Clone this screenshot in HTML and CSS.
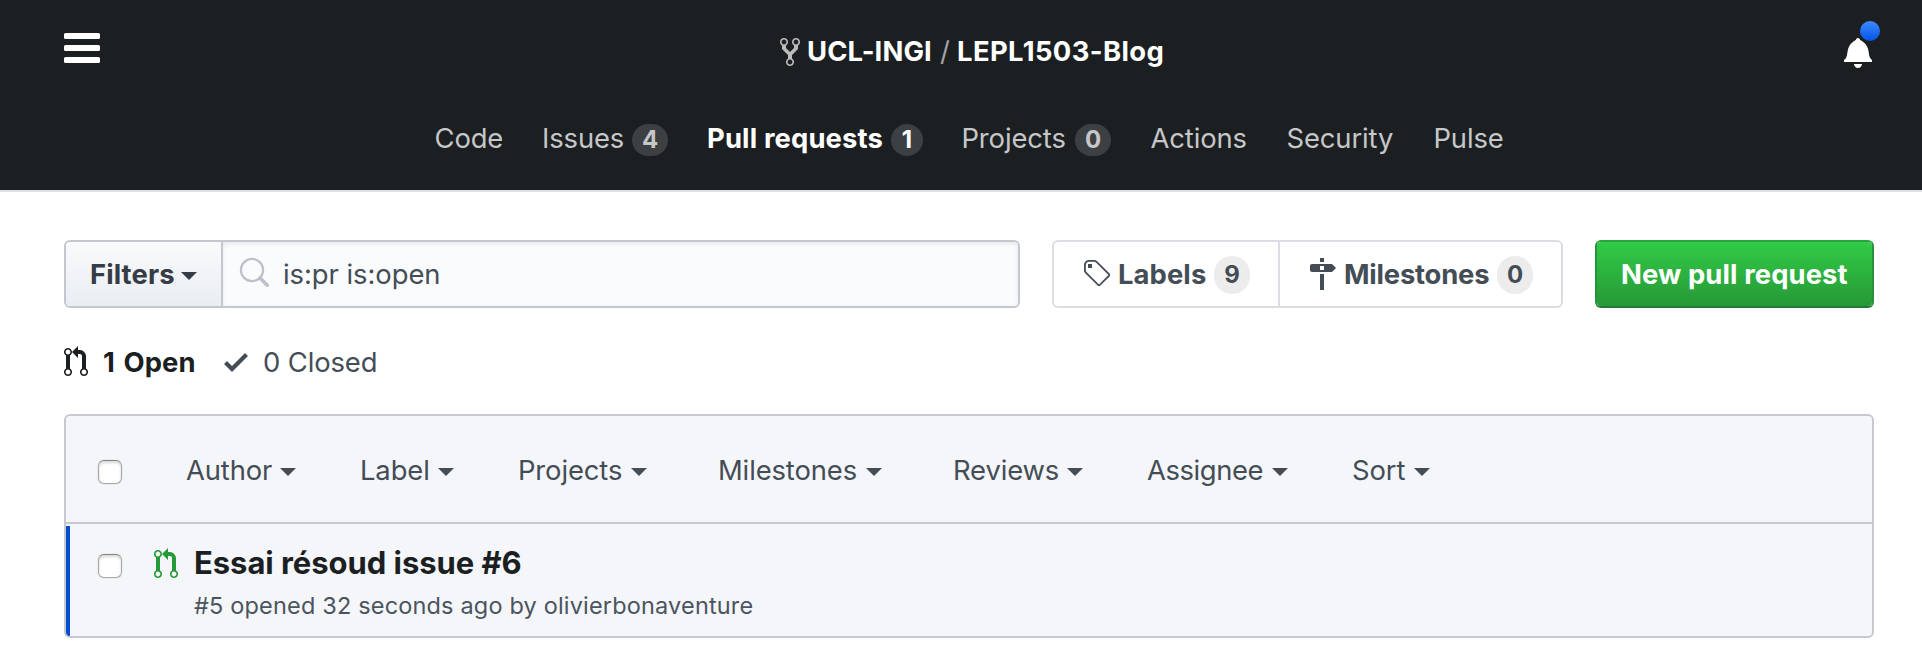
FILE: index.html
```html
<!DOCTYPE html>
<html lang="en">
<head>
<meta charset="utf-8">
<title>Pull requests · UCL-INGI/LEPL1503-Blog</title>
<link rel="stylesheet" href="styles.css">
</head>
<body>
<svg class="defs" aria-hidden="true">
  <symbol id="pr" viewBox="0 0 12 16"><path fill-rule="evenodd" d="M11 11.28V5c-.03-.78-.34-1.47-.94-2.06C9.46 2.35 8.78 2.03 8 2H7V0L4 3l3 3V4h1c.27.02.48.11.69.31.21.2.3.42.31.69v6.28A1.993 1.993 0 0 0 10 15a1.993 1.993 0 0 0 1-3.72zm-1 2.92c-.66 0-1.2-.55-1.2-1.2 0-.65.55-1.2 1.2-1.2.65 0 1.2.55 1.2 1.2 0 .65-.55 1.2-1.2 1.2zM4 3c0-1.11-.89-2-2-2a1.993 1.993 0 0 0-1 3.72v6.56A1.993 1.993 0 0 0 2 15a1.993 1.993 0 0 0 1-3.72V4.72c.59-.34 1-.98 1-1.72zm-.8 10c0 .66-.55 1.2-1.2 1.2-.65 0-1.2-.55-1.2-1.2 0-.65.55-1.2 1.2-1.2.65 0 1.2.55 1.2 1.2zM2 4.2C1.34 4.2.8 3.65.8 3c0-.65.55-1.2 1.2-1.2.65 0 1.2.55 1.2 1.2 0 .65-.55 1.2-1.2 1.2z"/></symbol>
</svg>
<header class="header">
  <div class="topbar">
    <button class="menu" aria-label="Menu"><i></i><i></i><i></i></button>
    <h1 class="repo">
      <svg class="fork" width="20" height="32" viewBox="0 0 10 16"><path fill-rule="evenodd" d="M8 1a1.993 1.993 0 0 0-1 3.72V6L5 8 3 6V4.72A1.993 1.993 0 0 0 2 1a1.993 1.993 0 0 0-1 3.72V6.5l3 3v1.78A1.993 1.993 0 0 0 5 15a1.993 1.993 0 0 0 1-3.72V9.5l3-3V4.72A1.993 1.993 0 0 0 8 1zM2 4.2C1.34 4.2.8 3.65.8 3c0-.65.55-1.2 1.2-1.2.65 0 1.2.55 1.2 1.2 0 .65-.55 1.2-1.2 1.2zm3 10c-.66 0-1.2-.55-1.2-1.2 0-.65.55-1.2 1.2-1.2.65 0 1.2.55 1.2 1.2 0 .65-.55 1.2-1.2 1.2zm3-10c-.66 0-1.2-.55-1.2-1.2 0-.65.55-1.2 1.2-1.2.65 0 1.2.55 1.2 1.2 0 .65-.55 1.2-1.2 1.2z"/></svg>
      <span class="owner">UCL-INGI</span><span class="slash">/</span><span class="name">LEPL1503-Blog</span>
    </h1>
    <div class="bell">
      <svg width="28" height="32" viewBox="0 0 14 16"><path fill-rule="evenodd" d="M14 12v1H0v-1l.73-.58c.77-.77.81-2.55 1.19-4.42C2.69 3.23 6 2 6 2c0-.55.45-1 1-1s1 .45 1 1c0 0 3.39 1.23 4.16 5 .38 1.88.42 3.66 1.19 4.42l.66.58H14zm-7 4c1.11 0 2-.89 2-2H5c0 1.11.89 2 2 2z"/></svg>
      <span class="dot"></span>
    </div>
  </div>
  <nav class="tabs">
    <a class="t-code">Code</a>
    <a class="t-issues"><span>Issues</span><b>4</b></a>
    <a class="t-pulls active"><span>Pull requests</span><b>1</b></a>
    <a class="t-projects"><span>Projects</span><b>0</b></a>
    <a class="t-actions">Actions</a>
    <a class="t-security">Security</a>
    <a class="t-pulse">Pulse</a>
  </nav>
</header>
<main class="main">
  <div class="toolbar">
    <div class="search">
      <button class="filters"><span>Filters</span><i class="caret"></i></button>
      <div class="query">
        <svg class="glass" width="32" height="32" viewBox="0 0 32 32"><circle cx="13" cy="13" r="11.1" stroke-width="2.2"/><path d="M21 21l7.2 7.2" stroke-width="3.6" stroke-linecap="round"/></svg>
        <span>is:pr is:open</span>
      </div>
    </div>
    <div class="subnav">
      <a class="labels">
        <svg width="28" height="32" viewBox="0 0 14 16"><path fill-rule="evenodd" d="M7.73 1.73C7.26 1.26 6.62 1 5.96 1H3.5C2.13 1 1 2.13 1 3.5v2.47c0 .66.27 1.3.73 1.77l6.06 6.06c.39.39 1.02.39 1.41 0l4.59-4.59a.996.996 0 0 0 0-1.41L7.73 1.73zM2.38 7.09c-.31-.3-.47-.7-.47-1.13V3.5c0-.88.72-1.59 1.59-1.59h2.47c.42 0 .83.16 1.13.47l6.14 6.13-4.73 4.73-6.13-6.15zM3.01 3h2v2H3V3h.01z"/></svg>
        <span>Labels</span><b>9</b>
      </a>
      <a class="miles">
        <svg width="28" height="32" viewBox="0 0 14 16"><path fill-rule="evenodd" d="M8 2H6V0h2v2zm4 5H2c-.55 0-1-.45-1-1V4c0-.55.45-1 1-1h10l2 2-2 2zM8 4H6v2h2V4zM6 16h2V8H6v8z"/></svg>
        <span>Milestones</span><b>0</b>
      </a>
    </div>
    <button class="new"><span>New pull request</span></button>
  </div>
  <div class="states">
    <svg width="24" height="32"><use href="#pr"/></svg>
    <span class="open">1 Open</span>
    <svg class="check" width="24" height="32" viewBox="0 0 12 16"><path d="M12 5l-8 8-4-4 1.5-1.5L4 10l6.5-6.5L12 5z"/></svg>
    <span class="closed">0 Closed</span>
  </div>
  <section class="box">
    <div class="boxhead">
      <input type="checkbox" aria-label="Select all">
      <div class="f-author"><span>Author</span><i class="caret"></i></div>
      <div class="f-label"><span>Label</span><i class="caret"></i></div>
      <div class="f-projects"><span>Projects</span><i class="caret"></i></div>
      <div class="f-miles"><span>Milestones</span><i class="caret"></i></div>
      <div class="f-reviews"><span>Reviews</span><i class="caret"></i></div>
      <div class="f-assignee"><span>Assignee</span><i class="caret"></i></div>
      <div class="f-sort"><span>Sort</span><i class="caret"></i></div>
    </div>
    <article class="row">
      <input type="checkbox" aria-label="Select">
      <svg class="green" width="24" height="32"><use href="#pr"/></svg>
      <div class="text">
        <h2><span>Essai résoud issue #6</span></h2>
        <p><span>#5 opened 32 seconds ago by olivierbonaventure</span></p>
      </div>
    </article>
  </section>
</main>
</body>
</html>
```
FILE: styles.css
```css
* { box-sizing: border-box; }
body {
  margin: 0;
  background: #fff;
  color: #444d56;
  font: 400 27.4px/42px Inter, "Liberation Sans", sans-serif;
  letter-spacing: -0.12px;
  white-space: nowrap;
}
.defs { display: block; width: 0; height: 0; }
svg { display: block; flex: none; fill: currentColor; }
h1, h2, p { margin: 0; font: inherit; }
button { font: inherit; letter-spacing: inherit; color: inherit; margin: 0; padding: 0; border: 0; background: none; }
a, a b { flex: none; }

.header { height: 192px; background: #1b1f22; border-bottom: 2px solid #dfe2e5; color: #fff; }
.topbar { display: flex; justify-content: space-between; align-items: flex-start; height: 117px; padding: 33px 50px 0 64px; }
.menu { display: flex; flex-direction: column; gap: 6px; width: 36px; }
.menu i { height: 6px; border-radius: 1.5px; background: #fff; }
.repo { display: flex; padding-top: 3px; width: 386px; margin-right: -2px; line-height: 30px; font-weight: 700; letter-spacing: 0.4px; }
.fork { color: #bbbcbd; margin-right: 7px; }
.owner { width: 133px; letter-spacing: 0.1px; }
.slash { width: 17px; color: #a4a5a7; font-weight: 400; }
.bell { position: relative; padding-top: 3px; }
.dot { position: absolute; left: 16px; top: -12px; width: 20px; height: 20px; border-radius: 50%; background: linear-gradient(#3d8bff, #0453e6); }

.tabs { display: flex; padding-left: 434.5px; color: #c6c7c8; }
.tabs a { display: flex; }
.tabs b { display: flex; justify-content: center; height: 32px; margin-top: 7px; border-radius: 16px; background: #3d4043; font-size: 24px; line-height: 32px; font-weight: 700; letter-spacing: 0; }
.t-code { width: 107.5px; }
.t-issues { width: 165px; }
.t-issues span { width: 90px; }
.t-issues b, .t-projects b { width: 36px; }
.t-pulls { width: 254.5px; }
.t-pulls span { width: 184px; }
.t-pulls b { width: 32px; }
.t-projects { width: 189px; }
.t-projects span { width: 113.5px; }
.t-actions { width: 136px; }
.t-security { width: 147px; }
.active { color: #fff; font-weight: 700; letter-spacing: 0.15px; }

.main { padding: 48px 48px 0 64px; }
.toolbar { display: flex; height: 68px; font-weight: 700; letter-spacing: 0.1px; }
.toolbar span, .toolbar b { flex: none; }
.search { display: flex; width: 956px; border: 2px solid #c4c8ce; border-radius: 6px; overflow: hidden; }
.filters { display: flex; width: 157px; padding-left: 24px; border-right: 2px solid #c4c8ce; color: #353c45; background: linear-gradient(#f9fafc, #e9edf2); line-height: 65px; }
.filters span { width: 91px; text-align: left; }
.caret { flex: none; width: 0; height: 0; border: 8px solid transparent; border-top-color: currentColor; border-bottom: 0; }
.filters .caret { margin-top: 30px; }
.query { display: flex; flex: 1; padding-left: 16px; background: #fafbfd; box-shadow: inset 0 2px 4px rgba(27,31,35,.09); font-weight: 400; letter-spacing: -0.05px; line-height: 65px; }
.query svg { margin: 15px 12px 0 0; }
.glass { fill: none; stroke: #bbc0c9; }
.subnav { display: flex; width: 511px; margin-left: 32px; border: 2px solid #dadde2; border-radius: 6px; line-height: 65px; letter-spacing: -0.2px; }
.subnav a { display: flex; }
.subnav svg { margin: 16px 8px 0 0; }
.subnav b { width: 36px; height: 38px; margin-top: 14px; border-radius: 19px; background: #ececec; text-align: center; font-size: 24px; line-height: 38px; font-weight: 700; letter-spacing: 0; }
.labels { width: 226px; padding-left: 28px; border-right: 2px solid #dadde2; letter-spacing: 0.1px; }
.labels span { width: 96px; }
.miles { padding-left: 28px; }
.miles span { width: 153px; }
.new { display: block; width: 279px; margin-left: 32px; padding-left: 24px; text-align: left; border: 2px solid; border-color: #2aa43d #26923a #217c31; border-radius: 6px; background: linear-gradient(#32cb48, #269836) padding-box; color: #fff; line-height: 65px; }

.states { display: flex; height: 106px; padding-top: 38px; line-height: 32px; }
.states svg:first-child { color: #1b1f22; }
.open { width: 121px; margin-left: 15px; color: #1b1f22; font-weight: 700; letter-spacing: 0.1px; word-spacing: 2px; }
.check { margin-right: 15px; }

.box { height: 224px; border: 2px solid #c6cad0; border-radius: 6px; background: #f4f6fa; overflow: hidden; }
.boxhead { display: flex; height: 108px; padding-left: 32px; border-bottom: 2px solid #c6cad0; }
.boxhead div { display: flex; flex: none; padding-top: 33px; }
.boxhead .caret { margin-top: 19px; }
.boxhead span { flex: none; }
input { appearance: none; flex: none; width: 24px; height: 24px; margin: 44px 64px 0 0; border: 1px solid #a9a9aa; border-top-color: #858586; border-radius: 6px; background: #fff; box-shadow: inset 0 2px 3px rgba(0,0,0,.16), 0 0 0 1px rgba(0,0,0,.04); }
.f-author { width: 174px; } .f-author span { width: 94px; }
.f-label { width: 158px; } .f-label span { width: 78px; }
.f-projects { width: 200px; } .f-projects span { width: 113px; }
.f-miles { width: 235px; } .f-miles span { width: 148px; }
.f-reviews { width: 194px; } .f-reviews span { width: 114px; }
.f-assignee { width: 205px; letter-spacing: -0.4px; } .f-assignee span { width: 125px; }
.f-sort span { width: 62px; }
.row { display: flex; height: 110px; margin-top: 2px; padding-left: 28px; border-left: 4px solid #044ed0; }
.row input { margin: 28px 32px 0 0; }
.green { margin: 22px 16px 0 0; color: #259a36; }
.row h2 { margin-top: 16px; font-size: 31px; line-height: 41px; font-weight: 700; letter-spacing: -0.05px; color: #1b1f22; }
.row p { margin-top: 7px; font-size: 23.5px; line-height: 32px; color: #4b545e; letter-spacing: 0.17px; }
```
